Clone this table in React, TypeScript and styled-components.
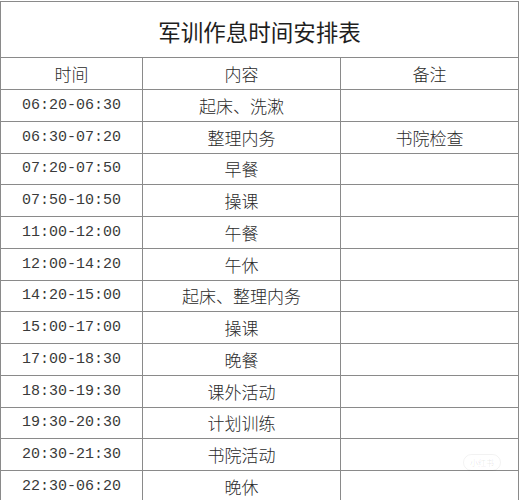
import styled, { createGlobalStyle } from 'styled-components';

const GlobalStyle = createGlobalStyle`
  html, body {
    margin: 0;
    padding: 0;
    background: #ffffff;
  }
  body {
    font-family: "Liberation Serif", "Noto Sans CJK SC", serif;
    color: #222;
  }
`

const rows: [string, string, string][] = [
  ['06:20-06:30', '起床、洗漱', ''],
  ['06:30-07:20', '整理内务', '书院检查'],
  ['07:20-07:50', '早餐', ''],
  ['07:50-10:50', '操课', ''],
  ['11:00-12:00', '午餐', ''],
  ['12:00-14:20', '午休', ''],
  ['14:20-15:00', '起床、整理内务', ''],
  ['15:00-17:00', '操课', ''],
  ['17:00-18:30', '晚餐', ''],
  ['18:30-19:30', '课外活动', ''],
  ['19:30-20:30', '计划训练', ''],
  ['20:30-21:30', '书院活动', ''],
  ['22:30-06:20', '晚休', ''],
]

function App() {
  return (
    <Page>
      <GlobalStyle />
      <Table>
        <colgroup>
          <col style={{ width: 142 }} />
          <col style={{ width: 198 }} />
          <col style={{ width: 178 }} />
        </colgroup>
        <thead>
          <tr>
            <Title colSpan={3}>军训作息时间安排表</Title>
          </tr>
          <tr>
            <Head>时间</Head>
            <Head>内容</Head>
            <Head>备注</Head>
          </tr>
        </thead>
        <tbody>
          {rows.map(([time, what, note]) => (
            <tr key={time}>
              <Cell mono>{time}</Cell>
              <Cell>{what}</Cell>
              <Cell>{note}</Cell>
            </tr>
          ))}
        </tbody>
      </Table>
      <Mark>小红书</Mark>
    </Page>
  )
}

export default App;

const Page = styled.div`
  position: relative;
  width: 519px;
  height: 500px;
  overflow: hidden;
  background: #fff;
`

const Table = styled.table`
  border-collapse: collapse;
  table-layout: fixed;
  width: 519px;
  margin-top: 1px;
`

const Title = styled.th`
  box-sizing: border-box;
  height: 56px;
  padding: 2px 0 0;
  border: 1px solid #8a8a8a;
  font-size: 22.5px;
  line-height: 26px;
  text-align: center;
  vertical-align: middle;
  color: #1e1e1e;
  font-family: "Noto Sans CJK SC", serif;
  font-weight: 400;
`

const Head = styled.th`
  box-sizing: border-box;
  height: 32px;
  padding: 0;
  border: 1px solid #8a8a8a;
  font-weight: 300;
  font-size: 17px;
  line-height: 20px;
  text-align: center;
  color: #2a2a2a;
  font-family: "Noto Sans CJK SC", serif;
`

const Cell = styled.td<{ mono?: boolean }>`
  box-sizing: border-box;
  height: 31.75px;
  padding: 1px 0 0;
  border: 1px solid #8a8a8a;
  text-align: center;
  vertical-align: middle;
  line-height: 20px;
  color: ${p => (p.mono ? '#3a3a3a' : '#2a2a2a')};
  font-size: ${p => (p.mono ? '15px' : '17px')};
  font-weight: 300;
  font-family: ${p => (p.mono ? '"Liberation Mono", monospace' : '"Noto Sans CJK SC", serif')};
`

const Mark = styled.span`
  position: absolute;
  left: 463px;
  top: 454px;
  padding: 2px 6px;
  border-radius: 10px;
  border: 1px solid rgba(0, 0, 0, 0.05);
  font-family: "Noto Sans CJK SC", sans-serif;
  font-size: 8px;
  color: rgba(0, 0, 0, 0.1);
`
